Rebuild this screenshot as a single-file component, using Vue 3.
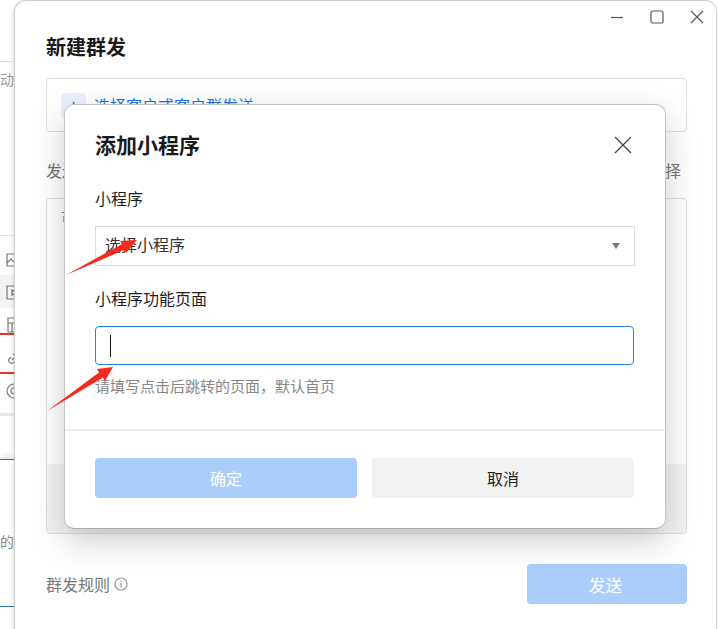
<script setup>
const menu = [
  { id: 'image', d: 'M1 3h14v12H1zM1 12l4-4 3 3 3-3 4 4' },
  { id: 'video', d: 'M1 2h14v13H1zM6 6l5 2.500-5 2.500z' },
  { id: 'file', d: 'M2 1h12v14H2zM2 6h12M6 6v9' },
  { id: 'link', d: 'M6 10l4-4M5 7l-2 2a3 3 0 0 0 4 4l2-2M11 9l2-2a3 3 0 0 0-4-4L7 5' },
  { id: 'at', d: 'M8 15a7 7 0 1 1 7-7v1a2 2 0 0 1-4 0V5M11 8a3 3 0 1 1-6 0 3 3 0 0 1 6 0' }
]
</script>

<template>
  <div class="page">
    <aside class="strip">
      <div class="strip-line"></div>
      <div class="strip-word">动</div>
      <div class="menu">
        <div v-for="item in menu" :key="item.id" class="menu-row" :class="{ active: item.id === 'video' }">
          <svg width="16" height="16" viewBox="0 0 16 16" fill="none" stroke="#777" stroke-width="1.200">
            <path :d="item.d" />
          </svg>
        </div>
        <div class="mark mark-a"></div>
        <div class="mark mark-b"></div>
      </div>
      <div class="lower">
        <div class="word-of">的</div>
      </div>
    </aside>

    <main class="window">
      <header class="controls">
        <svg width="14" height="14" viewBox="0 0 14 14" fill="none" stroke="#555" stroke-width="1.200"><path d="M1 7.500h12" /></svg>
        <svg width="14" height="14" viewBox="0 0 14 14" fill="none" stroke="#555" stroke-width="1.200"><rect x="1" y="1" width="12" height="12" rx="1.500" /></svg>
        <svg width="14" height="14" viewBox="0 0 14 14" fill="none" stroke="#555" stroke-width="1.200"><path d="M1 1l12 12M13 1L1 13" /></svg>
      </header>
      <h1 class="title">新建群发</h1>
      <div class="target">
        <span class="plus">+</span>
        <span class="target-link">选择客户或客户群发送</span>
      </div>
      <div class="send-row">
        <span>发送内容</span>
        <span>选择</span>
      </div>
      <div class="content">
        <div class="content-text">可</div>
        <div class="content-band"></div>
      </div>
      <footer class="foot">
        <span class="rule">群发规则
          <svg width="14" height="14" viewBox="0 0 14 14" fill="none" stroke="#999" stroke-width="1.200"><circle cx="7" cy="7" r="6" /><path d="M7 6v4.500M7 3.500v1.200" /></svg>
        </span>
        <button class="btn send" type="button">发送</button>
      </footer>
    </main>

    <section class="modal">
      <div class="modal-head">
        <h2 class="modal-title">添加小程序</h2>
        <svg class="modal-close" width="18" height="18" viewBox="0 0 18 18" fill="none" stroke="#444" stroke-width="1.200"><path d="M1 1l16 16M17 1L1 17" /></svg>
      </div>
      <div class="modal-body">
        <label class="field-label">小程序</label>
        <div class="select">
          <span>选择小程序</span>
          <i class="caret-down"></i>
        </div>
        <label class="field-label second">小程序功能页面</label>
        <div class="input"><i class="text-caret"></i></div>
        <p class="hint">请填写点击后跳转的页面，默认首页</p>
      </div>
      <div class="modal-foot">
        <button class="btn ok" type="button">确定</button>
        <button class="btn cancel" type="button">取消</button>
      </div>
    </section>

    <svg class="arrows" width="719" height="629" viewBox="0 0 719 629">
      <polygon fill="#f52a1e" points="66,275 122,244 120,241 137,240 126,253 124,250" />
      <polygon fill="#f52a1e" points="47,411 99,372.400 97,369 113,367 105,381 103,377.600" />
    </svg>
  </div>
</template>

<style>
html, body { margin: 0; background: #fff; overflow: hidden; }
</style>

<style scoped>
.page {
  position: relative;
  display: flex;
  width: 719px;
  height: 629px;
  overflow: hidden;
  background: #fff;
  font-family: "Noto Sans CJK SC", "Noto Sans", sans-serif;
  color: #1f1f1f;
}
.strip {
  flex: none;
  width: 14px;
  overflow: hidden;
  background: #fff;
}
.strip-line { height: 1px; margin-top: 61px; background: #ddd; }
.strip-word { height: 34px; line-height: 34px; font-size: 14px; color: #999; }
.menu {
  position: relative;
  margin-top: 139px;
  width: 60px;
  padding-top: 6px;
  border-top: 1px solid #e2e2e2;
  border-bottom: 3px solid #e8e8e8;
  height: 181px;
  box-sizing: border-box;
}
.menu-row { display: flex; align-items: center; height: 33px; padding-left: 6px; }
.menu-row.active { background: #f3f3f3; }
.mark { position: absolute; left: 0; width: 14px; height: 2px; background: #e8322b; }
.mark-a { top: 97px; }
.mark-b { top: 136px; }
.lower {
  margin-top: 43px;
  width: 14px;
  height: 148px;
  border-top: 1px solid #2a6fc9;
  border-bottom: 1px solid #2a6fc9;
  box-sizing: border-box;
  box-shadow: 0 -5px 5px -1px #e6e6e6;
}
.word-of { margin-top: 70px; font-size: 14px; line-height: 22px; color: #888; }

.window {
  flex: none;
  position: relative;
  width: 703px;
  height: 640px;
  box-sizing: border-box;
  padding: 0 29px 0 31px;
  background: #fff;
  border: 1px solid #cfcfcf;
  border-right-color: #d8d0d0;
  border-radius: 12px;
  margin-right: 2px;
  box-shadow: -1px 0 3px rgba(0, 0, 0, 0.12);
}
.controls {
  display: flex;
  justify-content: flex-end;
  gap: 26px;
  margin: 9px -17px 0 0;
  height: 14px;
}
.title { margin: 8px 0 0; font-size: 20px; line-height: 30px; font-weight: 700; color: #1a1a1a; }
.target {
  display: flex;
  align-items: center;
  gap: 8px;
  height: 54px;
  box-sizing: border-box;
  margin-top: 16px;
  padding-left: 14px;
  border: 1px solid #ddd;
  border-radius: 4px;
}
.plus {
  width: 25px;
  height: 25px;
  border-radius: 4px;
  background: #e8f1fd;
  color: #1a73e8;
  text-align: center;
  line-height: 25px;
  font-size: 18px;
}
.target-link { font-size: 16px; color: #1a73e8; }
.send-row {
  display: flex;
  justify-content: space-between;
  margin-top: 26px;
  padding-right: 6px;
  font-size: 16px;
  line-height: 24px;
  color: #777;
}
.content {
  display: flex;
  flex-direction: column;
  height: 336px;
  box-sizing: border-box;
  margin-top: 16px;
  border: 1px solid #ddd;
  border-radius: 4px;
  overflow: hidden;
}
.content-text { flex: 1; padding: 8px 14px; font-size: 14px; color: #888; }
.content-band { height: 69px; background: #f3f3f3; }
.foot {
  display: flex;
  align-items: center;
  justify-content: space-between;
  margin-top: 30px;
}
.rule { display: flex; align-items: center; gap: 4px; font-size: 16px; color: #777; }
.btn {
  border: 0;
  border-radius: 4px;
  font-family: inherit;
  font-size: 16px;
  height: 40px;
  padding: 0;
}
.send { width: 160px; padding-right: 3px; background: #abcdf9; color: #fff; font-size: 17px; }

.modal {
  position: absolute;
  left: 64px;
  top: 104px;
  width: 602px;
  height: 425px;
  box-sizing: border-box;
  background: #fff;
  border: 1px solid #c4c4c4;
  border-bottom-color: #aaa;
  border-radius: 10px;
  box-shadow: 0 12px 32px rgba(0, 0, 0, 0.2);
}
.modal-head {
  display: flex;
  align-items: center;
  justify-content: space-between;
  height: 30px;
  margin-top: 24px;
  padding: 0 33px 0 30px;
}
.modal-title { margin: 0; font-size: 21px; line-height: 30px; font-weight: 700; color: #1a1a1a; }
.modal-close { display: block; margin-top: 2px; }
.modal-body { padding: 0 30px; }
.field-label { display: block; margin-top: 27px; font-size: 16px; line-height: 24px; }
.field-label.second { margin-top: 20px; }
.select {
  display: flex;
  align-items: center;
  justify-content: space-between;
  height: 40px;
  box-sizing: border-box;
  margin-top: 16px;
  padding: 0 14px 4px 9px;
  border: 1px solid #ddd;
  font-size: 16px;
  color: #333;
}
.caret-down {
  width: 0;
  height: 0;
  margin-top: 4px;
  border-left: 4px solid transparent;
  border-right: 4px solid transparent;
  border-top: 6px solid #777;
}
.input {
  display: flex;
  align-items: center;
  height: 39px;
  box-sizing: border-box;
  margin: 16px 1px 0 0;
  padding-left: 14px;
  border: 1px solid #2680f5;
  border-radius: 4px;
}
.text-caret { width: 1px; height: 22px; background: #111; }
.hint { margin: 10px 0 0; font-size: 15px; line-height: 22px; color: #888; }
.modal-foot {
  display: flex;
  gap: 15px;
  margin-top: 32px;
  padding: 27px 31px 0 30px;
  border-top: 2px solid #eee;
}
.ok, .cancel { flex: 1; }
.ok { background: #abcdf9; color: #fff; }
.cancel { background: #f2f2f2; color: #1f1f1f; }
.arrows { position: absolute; left: 0; top: 0; pointer-events: none; }
</style>
